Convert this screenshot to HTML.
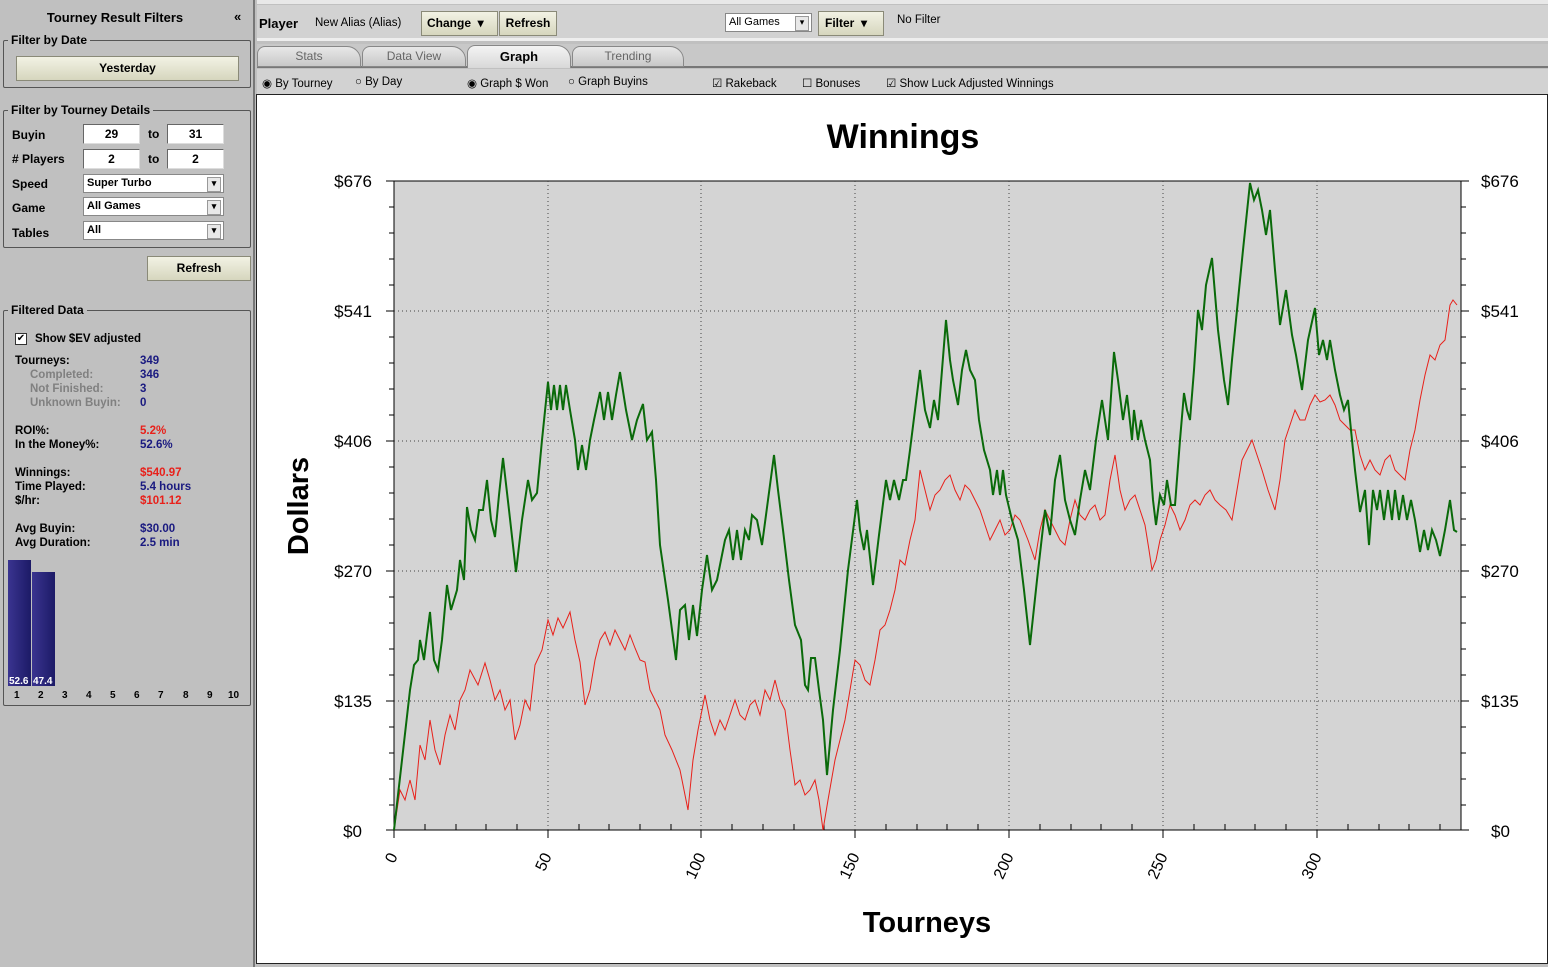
<!DOCTYPE html>
<html><head><meta charset="utf-8"><style>
*{box-sizing:border-box;margin:0;padding:0}
body{width:1548px;height:967px;background:#c0c0c0;font-family:"Liberation Sans",Verdana,sans-serif;font-size:12px;position:relative;overflow:hidden;color:#000}
.a{position:absolute}
.b{font-weight:bold}
fieldset{position:absolute;border:1px solid #555;border-radius:2px}
legend{font-weight:bold;font-size:12px;margin-left:4px;padding:0 3px}
.btn{position:absolute;background:linear-gradient(#f2f2e4,#d6d6be);border:1px solid #8a8a78;font-weight:bold;text-align:center;font-size:12px}
.in{position:absolute;background:#fff;border:1px solid #666;border-right-color:#ddd;border-bottom-color:#ddd;font-size:12px;font-weight:bold;text-align:center;height:20px;line-height:18px}
.sel{position:absolute;background:#fff;border:1px solid #888;height:19px;line-height:17px;font-size:11px;font-weight:bold;padding-left:3px}
.sel:after{content:"▾";position:absolute;right:2px;top:2px;width:12px;height:13px;border:1px solid #999;background:#e8e8e8;font-size:9px;line-height:11px;text-align:center}
.lbl{position:absolute;font-size:12px;font-weight:bold}
.k{position:absolute;font-size:11.5px;font-weight:bold}
.v{position:absolute;font-size:11.5px;font-weight:bold;color:#1a1a80}
.r{color:#e8201a}
.g{color:#808080}
</style></head><body>
<div class="a" style="left:0;top:0;width:255px;height:967px;background:#c0c0c0;border-right:2px solid #777"></div>
<div class="a b" style="left:0;top:10px;width:230px;text-align:center;font-size:13px">Tourney Result Filters</div>
<div class="a b" style="left:234px;top:9px;font-size:13px">«</div>
<fieldset style="left:3px;top:33px;width:248px;height:55px"><legend>Filter by Date</legend></fieldset>
<div class="btn" style="left:16px;top:56px;width:223px;height:25px;line-height:23px">Yesterday</div>
<fieldset style="left:3px;top:103px;width:248px;height:145px"><legend>Filter by Tourney Details</legend></fieldset>
<div class="lbl" style="left:12px;top:128px">Buyin</div>
<div class="in" style="left:83px;top:124px;width:57px">29</div><div class="lbl" style="left:148px;top:127px">to</div><div class="in" style="left:167px;top:124px;width:57px">31</div>
<div class="lbl" style="left:12px;top:152px"># Players</div>
<div class="in" style="left:83px;top:149px;width:57px">2</div><div class="lbl" style="left:148px;top:152px">to</div><div class="in" style="left:167px;top:149px;width:57px">2</div>
<div class="lbl" style="left:12px;top:177px">Speed</div><div class="sel" style="left:83px;top:174px;width:141px">Super Turbo</div>
<div class="lbl" style="left:12px;top:201px">Game</div><div class="sel" style="left:83px;top:197px;width:141px">All Games</div>
<div class="lbl" style="left:12px;top:226px">Tables</div><div class="sel" style="left:83px;top:221px;width:141px">All</div>
<div class="btn" style="left:147px;top:256px;width:104px;height:25px;line-height:23px">Refresh</div>
<fieldset style="left:3px;top:303px;width:248px;height:403px"><legend>Filtered Data</legend></fieldset>
<div class="a" style="left:15px;top:333px;width:12px;height:12px;background:#fff;border:1px solid #333;font-size:10px;line-height:10px;text-align:center">✔</div>
<div class="k" style="left:35px;top:333px">Show $EV adjusted</div>
<div class="k" style="left:15px;top:355px">Tourneys:</div><div class="v" style="left:140px;top:355px">349</div>
<div class="k g" style="left:30px;top:369px">Completed:</div><div class="v" style="left:140px;top:369px">346</div>
<div class="k g" style="left:30px;top:383px">Not Finished:</div><div class="v" style="left:140px;top:383px">3</div>
<div class="k g" style="left:30px;top:397px">Unknown Buyin:</div><div class="v" style="left:140px;top:397px">0</div>
<div class="k" style="left:15px;top:425px">ROI%:</div><div class="v r" style="left:140px;top:425px">5.2%</div>
<div class="k" style="left:15px;top:439px">In the Money%:</div><div class="v" style="left:140px;top:439px">52.6%</div>
<div class="k" style="left:15px;top:467px">Winnings:</div><div class="v r" style="left:140px;top:467px">$540.97</div>
<div class="k" style="left:15px;top:481px">Time Played:</div><div class="v" style="left:140px;top:481px">5.4 hours</div>
<div class="k" style="left:15px;top:495px">$/hr:</div><div class="v r" style="left:140px;top:495px">$101.12</div>
<div class="k" style="left:15px;top:523px">Avg Buyin:</div><div class="v" style="left:140px;top:523px">$30.00</div>
<div class="k" style="left:15px;top:537px">Avg Duration:</div><div class="v" style="left:140px;top:537px">2.5 min</div>
<div class="a" style="left:8px;top:560px;width:23px;height:126px;background:linear-gradient(90deg,#3a3490,#1c1a66)"></div>
<div class="a" style="left:32px;top:572px;width:23px;height:114px;background:linear-gradient(90deg,#3a3490,#1c1a66)"></div>
<div class="a b" style="left:9px;top:676px;color:#fff;font-size:10px">52.6</div>
<div class="a b" style="left:33px;top:676px;color:#fff;font-size:10px">47.4</div>
<div class="a b" style="left:0;top:690px;font-size:10px;width:250px">
<span class="a" style="left:14px">1</span><span class="a" style="left:38px">2</span><span class="a" style="left:62px">3</span><span class="a" style="left:86px">4</span><span class="a" style="left:110px">5</span><span class="a" style="left:134px">6</span><span class="a" style="left:158px">7</span><span class="a" style="left:183px">8</span><span class="a" style="left:207px">9</span><span class="a" style="left:228px">10</span></div>
<div class="a" style="left:257px;top:0;width:1291px;height:4px;background:#e8e8e8"></div>
<div class="a" style="left:257px;top:5px;width:1291px;height:36px;background:#d2d2d2;border-bottom:3px solid #eee"></div>
<div class="a b" style="left:259px;top:16px;font-size:13px">Player</div>
<div class="a" style="left:315px;top:17px;font-size:11.5px">New Alias (Alias)</div>
<div class="btn" style="left:421px;top:11px;width:77px;height:25px;line-height:23px;text-align:left;padding-left:5px">Change &nbsp;▾</div>
<div class="btn" style="left:499px;top:11px;width:58px;height:25px;line-height:23px">Refresh</div>
<div class="sel" style="left:725px;top:13px;width:87px;font-weight:normal">All Games</div>
<div class="btn" style="left:818px;top:11px;width:66px;height:25px;line-height:23px;text-align:left;padding-left:6px">Filter &nbsp;▾</div>
<div class="a" style="left:897px;top:14px;font-size:11.5px">No Filter</div>
<div class="a" style="left:257px;top:44px;width:1291px;height:24px;background:#c8c8c8;border-bottom:2px solid #777"></div>
<div class="a" style="left:257px;top:46px;width:104px;height:21px;background:linear-gradient(#e8e8e8,#c8c8c8);border:1px solid #888;border-radius:8px 14px 0 0;text-align:center;color:#666;line-height:19px">Stats</div>
<div class="a" style="left:362px;top:46px;width:104px;height:21px;background:linear-gradient(#e8e8e8,#c8c8c8);border:1px solid #888;border-radius:8px 14px 0 0;text-align:center;color:#666;line-height:19px">Data View</div>
<div class="a b" style="left:467px;top:45px;width:104px;height:23px;background:linear-gradient(#f4f4f4,#d8d8d8);border:1px solid #888;border-bottom:none;border-radius:8px 14px 0 0;text-align:center;line-height:21px;font-size:13px">Graph</div>
<div class="a" style="left:572px;top:46px;width:112px;height:21px;background:linear-gradient(#e8e8e8,#c8c8c8);border:1px solid #888;border-radius:8px 14px 0 0;text-align:center;color:#666;line-height:19px">Trending</div>
<div class="a" style="left:257px;top:69px;width:1291px;height:25px;background:#d2d2d2"></div>
<div class="a" style="left:262px;top:76px;font-size:11.5px;width:900px">
<span class="a" style="left:0">◉&nbsp;By Tourney</span><span class="a" style="left:93px">○&nbsp;By Day</span><span class="a" style="left:205px">◉&nbsp;Graph $ Won</span><span class="a" style="left:306px">○&nbsp;Graph Buyins</span>
<span class="a" style="left:450px">☑&nbsp;Rakeback</span><span class="a" style="left:540px">☐&nbsp;Bonuses</span><span class="a" style="left:624px;white-space:nowrap">☑&nbsp;Show Luck Adjusted Winnings</span></div>
<svg class="a" style="left:256px;top:94px" width="1292" height="870" viewBox="256 94 1292 870">
<rect x="256" y="94" width="1292" height="870" fill="#fff" stroke="#222" stroke-width="2"/>
<rect x="394" y="181" width="1067" height="649" fill="#d4d4d4" stroke="#000" stroke-width="1"/>
<g stroke="#444" stroke-dasharray="1,3" stroke-width="1">
<line x1="394" x2="1461" y1="311" y2="311"/><line x1="394" x2="1461" y1="441" y2="441"/><line x1="394" x2="1461" y1="571" y2="571"/><line x1="394" x2="1461" y1="701" y2="701"/>
<line x1="548" x2="548" y1="181" y2="830"/><line x1="701" x2="701" y1="181" y2="830"/><line x1="855" x2="855" y1="181" y2="830"/><line x1="1009" x2="1009" y1="181" y2="830"/><line x1="1163" x2="1163" y1="181" y2="830"/><line x1="1317" x2="1317" y1="181" y2="830"/>
</g>
<text x="903" y="148" font-size="34" font-weight="bold" text-anchor="middle" font-family="Liberation Sans">Winnings</text>
<text x="927" y="932" font-size="29" font-weight="bold" text-anchor="middle" font-family="Liberation Sans">Tourneys</text>
<text transform="translate(308,506) rotate(-90)" font-size="29" font-weight="bold" text-anchor="middle" font-family="Liberation Sans">Dollars</text>
<g font-size="17" font-family="Liberation Sans" text-anchor="end">
<text x="372" y="187">$676</text><text x="372" y="317">$541</text><text x="372" y="447">$406</text><text x="372" y="577">$270</text><text x="372" y="707">$135</text><text x="362" y="837">$0</text>
</g>
<g font-size="17" font-family="Liberation Sans">
<text x="1481" y="187">$676</text><text x="1481" y="317">$541</text><text x="1481" y="447">$406</text><text x="1481" y="577">$270</text><text x="1481" y="707">$135</text><text x="1491" y="837">$0</text>
</g>
<g font-size="16" font-family="Liberation Sans" text-anchor="end">
<text transform="translate(398,856) rotate(-65)">0</text><text transform="translate(552,856) rotate(-65)">50</text><text transform="translate(706,856) rotate(-65)">100</text><text transform="translate(860,856) rotate(-65)">150</text><text transform="translate(1014,856) rotate(-65)">200</text><text transform="translate(1168,856) rotate(-65)">250</text><text transform="translate(1322,856) rotate(-65)">300</text>
</g>
<g stroke="#000" stroke-width="1">
<path d="M394 830v8M548 830v8M701 830v8M855 830v8M1009 830v8M1163 830v8M1317 830v8M425 830v-6M456 830v-6M486 830v-6M517 830v-6M579 830v-6M609 830v-6M640 830v-6M671 830v-6M732 830v-6M763 830v-6M794 830v-6M824 830v-6M886 830v-6M917 830v-6M947 830v-6M978 830v-6M1040 830v-6M1071 830v-6M1101 830v-6M1132 830v-6M1194 830v-6M1225 830v-6M1255 830v-6M1286 830v-6M1348 830v-6M1379 830v-6M1409 830v-6M1440 830v-6"/>
<path d="M386 181h8M386 311h8M386 441h8M386 571h8M386 701h8M386 830h8M1461 181h8M1461 311h8M1461 441h8M1461 571h8M1461 701h8M1461 830h8"/>
<path d="M389 207h5M389 233h5M389 259h5M389 285h5M389 337h5M389 363h5M389 389h5M389 415h5M389 467h5M389 493h5M389 519h5M389 545h5M389 597h5M389 623h5M389 649h5M389 675h5M389 727h5M389 753h5M389 779h5M389 805h5M1461 207h5M1461 233h5M1461 259h5M1461 285h5M1461 337h5M1461 363h5M1461 389h5M1461 415h5M1461 467h5M1461 493h5M1461 519h5M1461 545h5M1461 597h5M1461 623h5M1461 649h5M1461 675h5M1461 727h5M1461 753h5M1461 779h5M1461 805h5"/>
</g>
<polyline fill="none" stroke="#e8201a" stroke-width="1" points="394,830 400,790 405,800 410,780 415,800 420,745 425,760 430,720 435,750 440,765 445,735 450,715 455,730 460,700 465,690 470,670 478,685 485,663 490,680 495,700 500,690 505,710 510,700 515,740 520,725 525,700 530,710 535,665 542,650 548,620 553,635 558,618 563,628 570,612 575,640 580,662 585,705 590,690 595,660 600,640 605,632 610,645 615,630 620,640 625,650 630,635 635,648 640,660 645,662 650,690 655,700 660,710 665,735 672,750 680,770 684,790 688,810 693,760 698,730 702,710 705,695 710,720 715,735 720,720 725,730 730,715 735,700 740,715 745,720 750,705 755,700 760,715 765,690 770,700 775,680 780,700 785,710 790,750 795,785 800,780 805,795 810,790 815,780 819,800 823,830 828,800 835,760 840,740 845,720 850,690 855,660 860,665 865,680 870,685 875,660 880,630 885,625 890,610 895,590 900,560 905,565 910,540 915,520 920,470 925,490 930,510 935,495 940,490 945,480 950,475 955,490 960,500 965,485 970,490 975,500 980,510 985,525 990,540 995,530 1000,520 1005,535 1010,530 1015,515 1020,520 1028,540 1035,560 1040,530 1045,510 1050,520 1055,530 1060,540 1065,545 1070,520 1075,500 1080,515 1085,520 1090,510 1095,505 1100,520 1105,515 1110,480 1115,455 1120,490 1125,510 1130,500 1135,495 1140,510 1145,525 1149,550 1152,570 1156,560 1160,540 1165,525 1170,505 1175,515 1180,530 1185,520 1190,505 1195,500 1200,505 1205,495 1210,490 1215,500 1220,505 1226,510 1232,520 1237,490 1242,460 1247,450 1252,440 1257,455 1262,470 1268,490 1275,510 1280,480 1285,440 1290,425 1295,410 1300,420 1305,420 1310,405 1315,395 1320,402 1325,400 1330,395 1335,405 1340,420 1345,425 1350,430 1355,430 1360,455 1365,470 1370,460 1375,470 1380,475 1385,460 1390,455 1395,470 1400,475 1405,480 1410,450 1415,430 1420,400 1425,375 1430,355 1435,360 1440,345 1445,340 1450,305 1453,300 1457,305"/>
<polyline fill="none" stroke="#0a6a0a" stroke-width="2" points="394,830 402,760 410,690 414,665 418,660 420,640 424,660 427,635 430,612 434,660 438,670 442,640 447,585 451,610 457,590 460,560 464,580 467,507 471,530 475,540 479,510 483,510 487,480 491,520 495,537 499,495 503,458 509,510 516,572 522,520 528,480 532,500 537,493 542,440 548,382 551,410 554,385 557,410 560,385 563,410 566,385 570,410 575,440 578,470 582,445 586,470 590,440 594,420 600,392 604,420 608,392 612,420 616,395 620,372 626,410 632,440 637,420 643,404 647,440 652,432 656,480 660,545 668,600 676,660 680,610 685,605 689,640 693,605 697,636 702,590 707,555 712,590 717,580 721,560 725,540 729,530 733,560 737,530 741,560 745,530 749,540 752,515 757,520 762,545 768,500 774,455 778,490 783,530 789,580 795,625 801,640 805,685 808,690 811,658 815,658 819,690 823,720 827,775 833,710 840,650 848,570 857,500 860,530 864,550 867,530 873,585 879,535 886,480 890,500 894,480 899,500 903,480 906,480 910,450 915,410 920,370 925,410 930,428 934,400 938,420 942,370 946,320 950,360 953,380 958,405 962,370 966,350 970,370 975,380 979,420 984,450 990,470 993,495 997,470 1000,495 1003,470 1006,495 1012,520 1018,540 1024,590 1030,645 1037,580 1045,510 1050,535 1055,480 1060,455 1065,500 1070,520 1075,535 1080,500 1085,470 1090,490 1096,440 1102,400 1108,440 1114,352 1118,380 1123,420 1127,395 1132,440 1134,410 1138,440 1141,420 1145,440 1150,460 1153,500 1156,525 1160,495 1164,505 1167,480 1171,505 1175,505 1180,440 1184,393 1187,410 1190,420 1194,370 1198,310 1202,330 1206,285 1212,258 1218,330 1224,380 1228,405 1232,360 1236,320 1243,250 1250,183 1254,200 1258,190 1262,210 1266,235 1270,210 1275,270 1280,325 1286,290 1292,335 1296,355 1302,390 1308,340 1315,308 1319,355 1323,340 1327,360 1330,340 1335,370 1340,395 1344,410 1348,400 1350,420 1355,470 1360,512 1365,490 1369,545 1373,490 1377,510 1380,490 1384,520 1388,490 1392,520 1395,490 1399,520 1403,495 1407,520 1411,500 1415,520 1420,552 1424,530 1428,550 1432,530 1436,540 1440,556 1445,530 1450,500 1454,530 1457,532"/>
</svg>
</body></html>
